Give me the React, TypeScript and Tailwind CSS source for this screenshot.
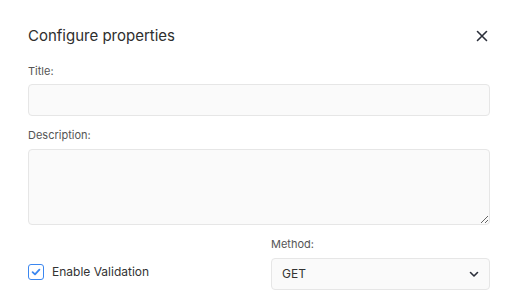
import React from "react";

export default function App() {
  return (
    <div
      className="w-[514px] h-[304px] bg-white pl-[28px] pr-[24px] pt-[26px] text-[#333]"
      style={{ fontFamily: "Inter, 'Noto Sans', sans-serif" }}
    >
      <div className="flex items-center justify-between h-[20px]">
        <h2 className="text-[15px] leading-[20px] font-normal text-[#2e2e2e]">Configure properties</h2>
        <button className="w-[20px] h-[20px] flex items-center justify-center mr-[-2px]">
          <svg width="12" height="12" viewBox="0 0 12 12" fill="none">
            <path d="M1.5 1.5L10.5 10.5M10.5 1.5L1.5 10.5" stroke="#2b2f3a" strokeWidth="1.6" strokeLinecap="round" />
          </svg>
        </button>
      </div>

      <label className="block mt-[18px] mb-[6px] text-[11px] leading-[14px] text-[#555]">Title:</label>
      <input
        className="block w-full h-[32px] rounded-[4px] border border-[#e6e6e6] bg-[#fafafa] outline-none px-[10px] text-[12px]"
        type="text"
      />

      <label className="block mt-[12px] mb-[7px] text-[11px] leading-[14px] text-[#555]">Description:</label>
      <textarea className="block w-full h-[76px] rounded-[4px] border border-[#e6e6e6] bg-[#fafafa] outline-none px-[10px] py-[6px] text-[12px]" />

      <div className="grid grid-cols-2 gap-6 mt-[12px]">
        <div className="flex items-end">
          <label className="flex items-center h-[32px] gap-[8px] pb-[5px]">
            <span className="w-[16px] h-[16px] rounded-[3px] border-[1.5px] border-[#3b87f0] bg-white flex items-center justify-center">
              <svg width="10" height="10" viewBox="0 0 10 10" fill="none">
                <path d="M1.6 5.2L4 7.4L8.4 2.6" stroke="#3b87f0" strokeWidth="1.8" strokeLinecap="round" strokeLinejoin="round" />
              </svg>
            </span>
            <span className="text-[12px] leading-[16px] text-[#333]">Enable Validation</span>
          </label>
        </div>
        <div>
          <label className="block mb-[7px] text-[11px] leading-[14px] text-[#555]">Method:</label>
          <div className="flex items-center justify-between h-[32px] rounded-[4px] border border-[#e6e6e6] bg-[#fafafa] pl-[10px] pr-[10px]">
            <span className="text-[12px] text-[#333]">GET</span>
            <svg width="10" height="10" viewBox="0 0 10 10" fill="none">
              <path d="M1.5 3.5L5 7L8.5 3.5" stroke="#2b2f3a" strokeWidth="1.6" strokeLinecap="round" strokeLinejoin="round" />
            </svg>
          </div>
        </div>
      </div>
    </div>
  );
}
